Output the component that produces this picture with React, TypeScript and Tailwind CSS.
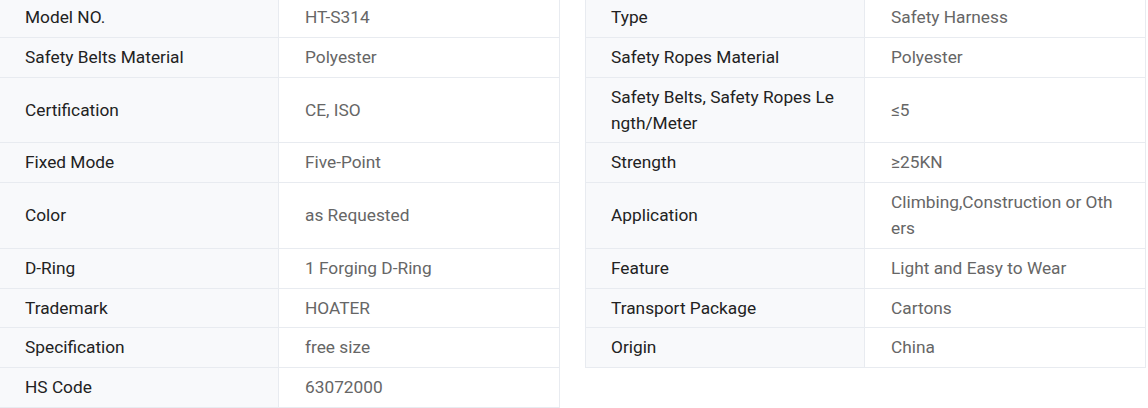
import React from "react";

type Spec = { label: string; value: string };

const left: Spec[] = [
  { label: "Model NO.", value: "HT-S314" },
  { label: "Safety Belts Material", value: "Polyester" },
  { label: "Certification", value: "CE, ISO" },
  { label: "Fixed Mode", value: "Five-Point" },
  { label: "Color", value: "as Requested" },
  { label: "D-Ring", value: "1 Forging D-Ring" },
  { label: "Trademark", value: "HOATER" },
  { label: "Specification", value: "free size" },
  { label: "HS Code", value: "63072000" },
];

const right: Spec[] = [
  { label: "Type", value: "Safety Harness" },
  { label: "Safety Ropes Material", value: "Polyester" },
  { label: "Safety Belts, Safety Ropes Length/Meter", value: "≤5" },
  { label: "Strength", value: "≥25KN" },
  { label: "Application", value: "Climbing,Construction or Others" },
  { label: "Feature", value: "Light and Easy to Wear" },
  { label: "Transport Package", value: "Cartons" },
  { label: "Origin", value: "China" },
];

function Row({ item, first }: { item: Spec; first: boolean }) {
  return (
    <div
      className={`flex border-x border-b border-[#e8ebf0] ${first ? "border-t" : ""}`}
    >
      <div className="flex w-[279px] shrink-0 items-center border-r border-[#e8ebf0] bg-[#f8f9fb] pl-[25px] pr-[24px] pt-[6px] pb-[6.75px] text-[#222222] break-all">
        {item.label}
      </div>
      <div className="flex min-w-0 flex-1 items-center pl-[26px] pr-[26px] pt-[6px] pb-[6.75px] text-[#666666] break-all">
        {item.value}
      </div>
    </div>
  );
}

export default function App() {
  const cells: React.ReactNode[] = [];
  for (let i = 0; i < left.length; i++) {
    cells.push(<Row key={`l${i}`} item={left[i]} first={i === 0} />);
    cells.push(
      right[i] ? (
        <Row key={`r${i}`} item={right[i]} first={i === 0} />
      ) : (
        <div key={`r${i}`} />
      )
    );
  }
  return (
    <div className="h-[408px] w-[1148px] overflow-hidden bg-white">
      <div
        className="-ml-px -mt-[3px] grid grid-cols-[561px_561px] gap-x-[25px] text-[17.3px] leading-[26px]"
        style={{ fontFamily: "Roboto, 'Liberation Sans', sans-serif" }}
      >
        {cells}
      </div>
    </div>
  );
}
